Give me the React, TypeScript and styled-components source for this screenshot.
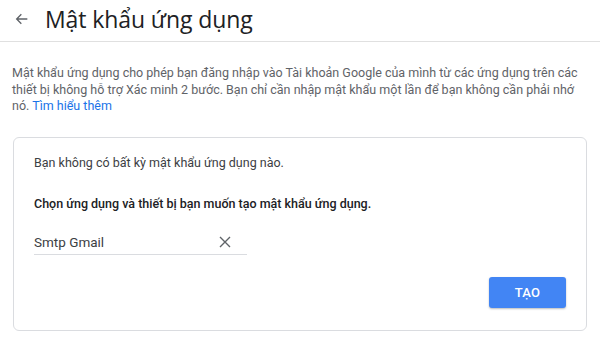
import React from 'react'
import styled, { createGlobalStyle } from 'styled-components'

const GlobalStyle = createGlobalStyle`
  html, body {
    margin: 0;
    padding: 0;
    background: #fff;
  }
  body {
    font-family: Roboto, 'Noto Sans', Arial, sans-serif;
    color: #202124;
  }
`

const Page = styled.div`
  width: 600px;
  height: 348px;
  overflow: hidden;
  background: #fff;
`

const Header = styled.header`
  display: flex;
  align-items: center;
  height: 37px;
  padding: 0 0 4px 12px;
  border-bottom: 1px solid #e0e0e0;
`

const BackButton = styled.button`
  display: flex;
  align-items: center;
  justify-content: center;
  width: 20px;
  height: 20px;
  padding: 0;
  margin-right: 13px;
  background: none;
  border: none;
  color: #5f6368;
`

const Title = styled.h1`
  margin: 0;
  font-family: 'Open Sans', Roboto, sans-serif;
  font-size: 23px;
  font-weight: 400;
  color: #202124;
  letter-spacing: -0.1px;
`

const Intro = styled.p`
  margin: 23px 12px 0 12px;
  font-size: 12.5px;
  line-height: 16.5px;
  color: #5f6368;
`

const Link = styled.a`
  color: #1a73e8;
  text-decoration: none;
`

const Card = styled.section`
  margin: 22px 13px 0 13px;
  height: 194px;
  box-sizing: border-box;
  border: 1px solid #dadce0;
  border-radius: 6px;
  padding: 17px 20px 0 20px;
  display: flex;
  flex-direction: column;
`

const CardText = styled.p<{ $bold?: boolean }>`
  margin: 0 0 ${(p) => (p.$bold ? '19px' : '25px')} 0;
  font-size: 12.5px;
  line-height: 16px;
  font-weight: ${(p) => (p.$bold ? 500 : 400)};
  color: ${(p) => (p.$bold ? '#202124' : '#3c4043')};
`

const Field = styled.div`
  display: flex;
  align-items: center;
  width: 213px;
  height: 23px;
  border-bottom: 1px solid #dadce0;
`

const FieldValue = styled.span`
  flex: 1;
  font-size: 13.5px;
  color: #3c4043;
`

const ClearButton = styled.button`
  display: flex;
  align-items: center;
  justify-content: center;
  width: 16px;
  height: 16px;
  padding: 0;
  margin-right: 14px;
  background: none;
  border: none;
  color: #5f6368;
`

const Actions = styled.div`
  display: flex;
  justify-content: flex-end;
  margin-top: 22px;
`

const PrimaryButton = styled.button`
  width: 77px;
  height: 31px;
  border: none;
  border-radius: 3px;
  background: #4285f4;
  color: #fff;
  font-family: Roboto, sans-serif;
  font-size: 13px;
  font-weight: 500;
  letter-spacing: 0.3px;
  box-shadow: 0 1px 2px rgba(60, 64, 67, 0.35);
`

export default function App() {
  return (
    <Page>
      <GlobalStyle />
      <Header>
        <BackButton aria-label="Quay lại">
          <svg width="16" height="16" viewBox="0 0 24 24" fill="none" stroke="currentColor" strokeWidth="2">
            <path d="M20 12H5M11 5l-7 7 7 7" />
          </svg>
        </BackButton>
        <Title>Mật khẩu ứng dụng</Title>
      </Header>

      <Intro>
        Mật khẩu ứng dụng cho phép bạn đăng nhập vào Tài khoản Google của mình từ các ứng dụng trên các
        thiết bị không hỗ trợ Xác minh 2 bước. Bạn chỉ cần nhập mật khẩu một lần để bạn không cần phải nhớ
        nó. <Link href="#">Tìm hiểu thêm</Link>
      </Intro>

      <Card>
        <CardText>Bạn không có bất kỳ mật khẩu ứng dụng nào.</CardText>
        <CardText $bold>Chọn ứng dụng và thiết bị bạn muốn tạo mật khẩu ứng dụng.</CardText>
        <Field>
          <FieldValue>Smtp Gmail</FieldValue>
          <ClearButton aria-label="Xoá">
            <svg width="14" height="14" viewBox="0 0 14 14" stroke="currentColor" strokeWidth="1.4">
              <path d="M2 2l10 10M12 2L2 12" />
            </svg>
          </ClearButton>
        </Field>
        <Actions>
          <PrimaryButton>TẠO</PrimaryButton>
        </Actions>
      </Card>
    </Page>
  )
}
